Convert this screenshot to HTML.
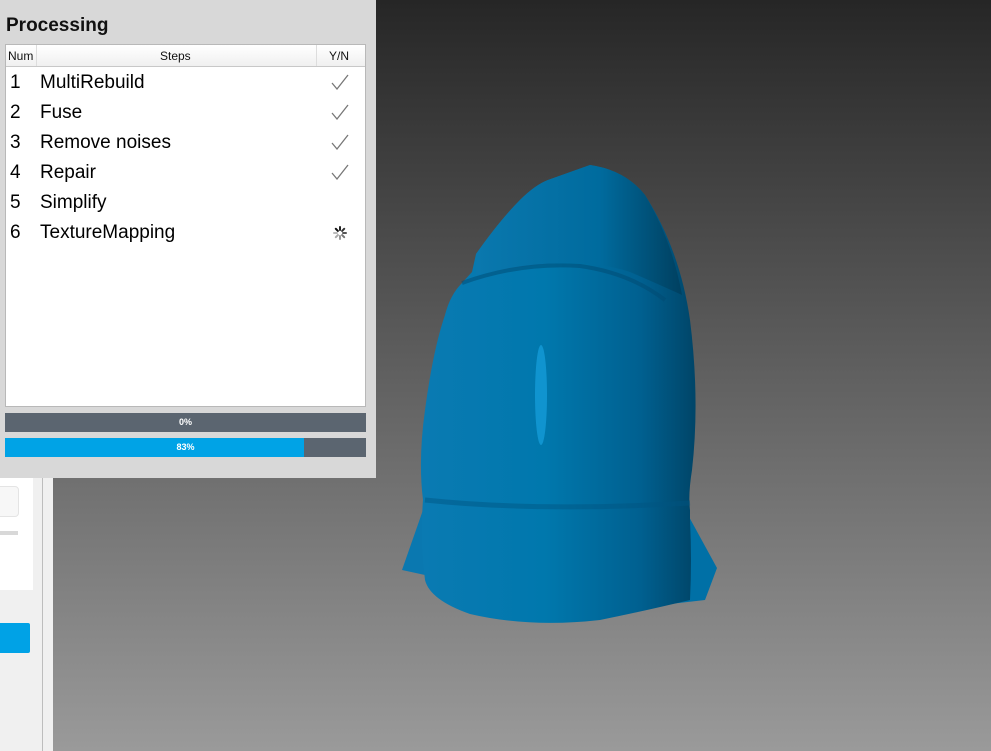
<!DOCTYPE html>
<html><head><meta charset="utf-8"><style>
body{margin:0;width:991px;height:751px;overflow:hidden;position:relative;font-family:"Liberation Sans",sans-serif;background:#f0f0f0}
#vp{position:absolute;left:53px;top:0;width:938px;height:751px;background:linear-gradient(#262626,#9a9a9a)}
#vline{position:absolute;left:42px;top:0;width:1px;height:751px;background:#bdbdbd}
#panel{position:absolute;left:0;top:0;width:376px;height:478px;background:#d8d8d8}
h1{position:absolute;left:6px;top:15px;margin:0;font-size:19px;font-weight:bold;color:#111}
#tbl{position:absolute;left:5px;top:44px;width:359px;height:361px;border:1px solid #b8b8b8;background:#fff}
#hdr{height:21px;border-bottom:1px solid #c8c8c8;background:linear-gradient(#fff,#f0f0f0);font-size:12px;position:relative;color:#111}
#hdr span{position:absolute;top:4px}
.row{position:absolute;left:0;height:30px;font-size:19px;color:#000;width:100%}
.row .n{position:absolute;left:4px;top:5px}
.row .t{position:absolute;left:34px;top:5px}
.row svg{position:absolute;left:325px;top:7px}
.bar{position:absolute;left:5px;width:361px;height:19px;background:#5b6570;color:#fff;font-size:9px;font-weight:bold;text-align:center;line-height:19px}
</style></head><body>
<div id="vline"></div>
<div style="position:absolute;left:0;top:478px;width:33px;height:112px;background:#fff"></div>
<div style="position:absolute;left:-5px;top:486px;width:22px;height:29px;background:#f7f7f7;border:1px solid #e4e4e4;border-radius:4px"></div>
<div style="position:absolute;left:0;top:531px;width:18px;height:4px;background:#d8d8d8"></div>
<div style="position:absolute;left:0;top:623px;width:30px;height:30px;background:#00a2e6;border-radius:0 2px 2px 0"></div>
<div id="vp">
<svg width="991" height="751" style="position:absolute;left:-53px;top:0" viewBox="0 0 991 751">
<defs>
<linearGradient id="g" x1="0" x2="1"><stop offset="0" stop-color="#0a7ab2"/><stop offset=".45" stop-color="#0078ad"/><stop offset=".8" stop-color="#006090"/><stop offset="1" stop-color="#004568"/></linearGradient>
<linearGradient id="g2" x1="0" x2="1"><stop offset="0" stop-color="#0a78ae"/><stop offset=".6" stop-color="#006b9e"/><stop offset="1" stop-color="#004060"/></linearGradient>
</defs>
<path d="M423 510 L402 570 L425 575 Z" fill="#0a78b0"/>
<path d="M688 515 L717 568 L705 600 L670 604 Z" fill="#0070a6"/>
<path d="M590 165 Q625 170 645 195 Q680 250 690 320 Q700 400 692 470 Q688 495 690 510 L690 520 Q692 560 690 600 Q640 612 600 620 Q530 628 470 614 Q430 600 425 580 Q420 540 423 500 Q418 460 425 410 Q433 350 445 315 Q450 295 462 283 L472 272 L476 254 Q500 220 520 200 Q535 185 548 180 Z" fill="url(#g)"/>
<path d="M590 165 Q625 170 645 195 Q672 240 682 295 Q660 285 630 272 Q600 262 560 263 Q520 266 476 275 L476 254 Q500 220 520 200 Q535 185 548 180 Z" fill="url(#g2)"/>
<path d="M462 283 Q520 262 580 266 Q630 273 665 300" stroke="#004a72" stroke-width="4" fill="none" opacity=".5"/>
<path d="M425 500 Q540 512 690 503" stroke="#005580" stroke-width="5" fill="none" opacity=".45"/>
<ellipse cx="541" cy="395" rx="6" ry="50" fill="#1aa6e6" opacity=".6"/>
</svg>
</div>
<div id="panel">
<h1>Processing</h1>
<div id="tbl">
<div id="hdr"><span style="left:2px">Num</span><span style="left:154px">Steps</span><span style="left:323px">Y/N</span>
<div style="position:absolute;left:30px;top:0;width:1px;height:21px;background:#ddd"></div>
<div style="position:absolute;left:310px;top:0;width:1px;height:21px;background:#ddd"></div></div>
<div class="row" style="top:22px"><span class="n">1</span><span class="t">MultiRebuild</span><svg width="18" height="16"><path d="M1 9 L6 15 L17 1" stroke="#777" stroke-width="1.3" fill="none"/></svg></div>
<div class="row" style="top:52px"><span class="n">2</span><span class="t">Fuse</span><svg width="18" height="16"><path d="M1 9 L6 15 L17 1" stroke="#777" stroke-width="1.3" fill="none"/></svg></div>
<div class="row" style="top:82px"><span class="n">3</span><span class="t">Remove noises</span><svg width="18" height="16"><path d="M1 9 L6 15 L17 1" stroke="#777" stroke-width="1.3" fill="none"/></svg></div>
<div class="row" style="top:112px"><span class="n">4</span><span class="t">Repair</span><svg width="18" height="16"><path d="M1 9 L6 15 L17 1" stroke="#777" stroke-width="1.3" fill="none"/></svg></div>
<div class="row" style="top:142px"><span class="n">5</span><span class="t">Simplify</span></div>
<div class="row" style="top:172px"><span class="n">6</span><span class="t">TextureMapping</span><svg width="16" height="16" style="left:326px;top:8px"><g stroke-width="2" stroke-linecap="round"><path d="M8 2V5" stroke="#222"/><path d="M12.2 3.8L10.1 5.9" stroke="#333"/><path d="M14 8H11" stroke="#555"/><path d="M12.2 12.2L10.1 10.1" stroke="#777"/><path d="M8 14V11" stroke="#999"/><path d="M3.8 12.2L5.9 10.1" stroke="#aaa"/><path d="M2 8H5" stroke="#bbb"/><path d="M3.8 3.8L5.9 5.9" stroke="#111"/></g></svg></div>
</div>
<div class="bar" style="top:413px">0%</div>
<div class="bar" style="top:438px;background:linear-gradient(90deg,#00a3e6 0,#00a3e6 299px,#5b6570 299px)">83%</div>
</div>
</body></html>
